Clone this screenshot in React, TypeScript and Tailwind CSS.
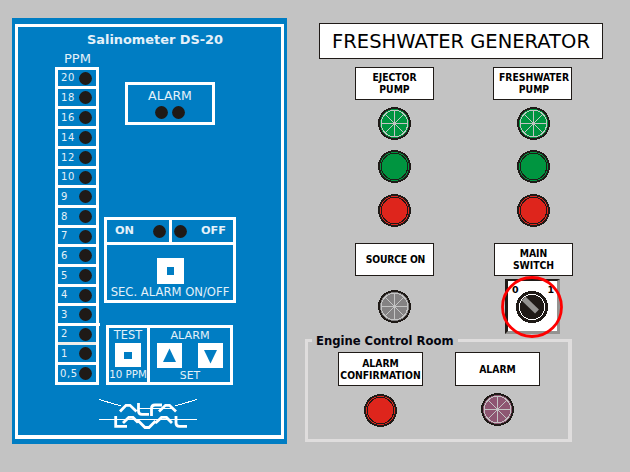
import React from "react";

const LEVELS: { label: string; height: string; extra?: string }[] = [
  { label: "20", height: "h-[16px]" },
  { label: "18", height: "h-[17px]" },
  { label: "16", height: "h-[17px]" },
  { label: "14", height: "h-[17px]" },
  { label: "12", height: "h-[17px]" },
  { label: "10", height: "h-[16px]" },
  { label: "9", height: "h-[17px]" },
  { label: "8", height: "h-[17px]" },
  { label: "7", height: "h-[16px]" },
  { label: "6", height: "h-[17px]" },
  { label: "5", height: "h-[17px]" },
  { label: "4", height: "h-[16px]" },
  {
    label: "3",
    height: "h-[17px]",
    extra: "relative after:absolute after:-right-[4px] after:-bottom-[3px] after:h-[3px] after:w-[4px] after:bg-white",
  },
  { label: "2", height: "h-[16px]", extra: "shadow-[0_3px_0_#efeeea]" },
  { label: "1", height: "h-[17px]" },
  { label: "0,5", height: "h-[17px]" },
];

function Dot({ className = "" }: { className?: string }) {
  return (
    <svg width="13" height="13" viewBox="0 0 13 13" className={`block shrink-0 ${className}`}>
      <circle cx="6.5" cy="6.5" r="6.4" fill="#1f1a17" />
    </svg>
  );
}

function Scale() {
  return (
    <div className="flex h-[318px] w-[44px] flex-col gap-[3px] bg-white p-[3px]">
      {LEVELS.map((level) => (
        <div
          key={level.label}
          className={`flex shrink-0 items-center justify-between bg-[#007dc3] pr-[4px] ${level.height} ${level.extra ?? ""} ${level.label === "0,5" ? "pl-[2px]" : "pl-[3px]"}`}
        >
          <span className="w-0 text-[10px] leading-[14px] tracking-[0.6px] whitespace-nowrap">{level.label}</span>
          <Dot />
        </div>
      ))}
    </div>
  );
}

function AlfaLavalLogo() {
  return (
    <svg width="98" height="34" viewBox="0 0 98 34" fill="none" stroke="#fff" className="mt-[13px] block">
      <path strokeWidth="1" shapeRendering="crispEdges" d="M0 1.5 L22 8 M76 8 L98 1.5 M40 10.5 H74 M0 21.5 H98" />
      <path
        strokeWidth="2.8"
        d="M21 13.5 L27 7.300 H31 L37.500 13.5 M39.500 5 V13 Q39.500 16.300 43 16.300 H50 M52.500 18 V10.500 Q52.500 7 56 7 H63 M60 13.500 L66.500 7.300 H70.500 L77 13.500"
      />
      <path
        strokeWidth="2.8"
        d="M16.700 18 V28.400 H28 M24 25 L29.700 19.400 H34 L39 24.500 M39 22.500 L46 29.500 H50 L56.500 23 M56.500 25 L62.500 19.400 H67.500 L73 25 M77 18 V25 Q77 28.400 80.500 28.400 H88"
      />
    </svg>
  );
}

function Salinometer() {
  return (
    <section className="mt-[18px] ml-[12px] h-[426px] w-[275px] shrink-0 bg-[#007dc3] px-[3px] pt-[6px] text-[#e4f1f9]">
      <div className="h-[415px] border-[3px] border-b-4 border-white">
        <h1 className="mt-1 pl-[69px] text-[12.9px] leading-[17px] font-bold whitespace-nowrap">Salinometer DS-20</h1>
        <div className="flex">
          <div className="ml-[37px] w-[44px] shrink-0 pt-[2px]">
            <div className="pl-[9px] text-[13px] leading-[17px]">PPM</div>
            <Scale />
          </div>
          <div className="flex flex-col items-start">
            <div className="mt-[34px] ml-[26px] flex h-[43px] w-[90px] flex-col items-center border-[3px] border-white pt-[2px]">
              <span className="text-[12.5px] leading-[17px]">ALARM</span>
              <div className="mt-[1.5px] flex gap-[4px]">
                <Dot />
                <Dot />
              </div>
            </div>

            <div className="mt-[92px] ml-[5px] h-[86px] w-[132px] border-[3px] border-white">
              <div className="flex h-[25px] border-b-[3px] border-white text-[11.3px] leading-[22px] font-bold">
                <div className="flex w-[65px] items-center justify-between border-r-[3px] border-white pr-[3px] pl-[8px]">
                  <span>ON</span>
                  <Dot />
                </div>
                <div className="flex grow items-center justify-between pr-[7px] pl-[2px]">
                  <Dot />
                  <span>OFF</span>
                </div>
              </div>
              <div className="flex flex-col items-center">
                <div className="mt-[13px] ml-[1px] flex h-[26px] w-[27px] items-center justify-center bg-white">
                  <div className="h-[8px] w-[7px] bg-[#007dc3]" />
                </div>
                <span className="text-[11.6px] leading-[17px] whitespace-nowrap">SEC. ALARM ON/OFF</span>
              </div>
            </div>

            <div className="mt-[22px] ml-[7px] flex h-[60px] w-[127px] border-[3px] border-white">
              <div className="flex w-[41px] flex-col items-center border-r-[3px] border-white text-[11.4px] leading-[15px]">
                <span>TEST</span>
                <div className="flex h-[26px] w-[26px] items-center justify-center bg-white">
                  <div className="h-[7px] w-[8px] bg-[#007dc3]" />
                </div>
                <span className="text-[10.3px] leading-[15px] whitespace-nowrap">10 PPM</span>
              </div>
              <div className="flex grow flex-col items-center text-[11.2px] leading-[15px]">
                <span>ALARM</span>
                <div className="flex gap-[16px]">
                  <svg width="25" height="25" viewBox="0 0 25 25" className="bg-white">
                    <path d="M12.500 5.500 L19 19 H6 Z" fill="#007dc3" />
                  </svg>
                  <svg width="25" height="25" viewBox="0 0 25 25" className="bg-white">
                    <path d="M12.500 20.500 L19 7 H6 Z" fill="#007dc3" />
                  </svg>
                </div>
                <span className="text-[10.8px] leading-[16px]">SET</span>
              </div>
            </div>

            <AlfaLavalLogo />
          </div>
        </div>
      </div>
    </section>
  );
}

function Plate({ children, className = "" }: { children: React.ReactNode; className?: string }) {
  return (
    <div
      className={`flex shrink-0 items-center justify-center border border-[#1f1a17] bg-white text-center text-[10.3px] leading-[12px] font-bold whitespace-nowrap text-black font-stretch-condensed ${className}`}
    >
      {children}
    </div>
  );
}

function Lamp({ color, spokes = false, className = "" }: { color: string; spokes?: boolean; className?: string }) {
  return (
    <svg width="33" height="33" viewBox="0 0 33 33" fill="none" shapeRendering="crispEdges" className={`block shrink-0 ${className}`}>
      <circle cx="16.5" cy="16.5" r="15.5" fill={color} stroke="#1f1a17" strokeWidth="2" />
      {spokes ? (
        <g stroke="#c4c4c4">
          <circle cx="16.5" cy="16.5" r="13.2" />
          <path d="M16.5 3 V30 M3 16.5 H30 M7 7 L26 26 M26 7 L7 26" />
          <circle cx="16.5" cy="16.5" r="1" />
        </g>
      ) : (
        <circle cx="16.5" cy="16.5" r="13.2" stroke="#1f1a17" />
      )}
    </svg>
  );
}

function MainSwitch() {
  return (
    <div className="relative mt-[3px] ml-[12px] h-[55px] w-[55px] self-start border-[3px] border-t-[2px] border-t-[#1f1a17] border-r-[#949391] border-b-[#949391] border-l-[#1f1a17] bg-white">
      <div className="flex justify-between pt-[3px] pr-[3px] pl-[4px] text-[9.5px] leading-[12px] font-bold text-black">
        <span>0</span>
        <span>1</span>
      </div>
      <svg width="62" height="62" viewBox="0 0 62 62" fill="none" className="absolute -top-[5px] -left-[7px]">
        <circle cx="31" cy="31" r="16" fill="#1f1a17" shapeRendering="crispEdges" />
        <circle cx="31" cy="31" r="12.700" stroke="#fff" shapeRendering="crispEdges" />
        <path d="M22.500 22.500 L36 35.500" stroke="#949391" strokeWidth="5.500" />
        <circle cx="31" cy="31" r="29.500" stroke="#fe0000" strokeWidth="2.800" />
      </svg>
    </div>
  );
}

function PumpLamps({ className = "" }: { className?: string }) {
  return (
    <div className={`flex flex-col ${className}`}>
      <Lamp color="#009540" spokes className="mt-[7px]" />
      <Lamp color="#009540" className="mt-[10px]" />
      <Lamp color="#de251c" className="mt-[11px]" />
    </div>
  );
}

export default function App() {
  return (
    <main className="flex h-[472px] w-[630px] overflow-hidden bg-[#c3c3c3] font-['DejaVu_Sans',sans-serif]">
      <Salinometer />
      <div className="flex grow flex-col items-start">
        <h2 className="mt-[23px] ml-[32px] flex h-[36px] w-[284px] items-center justify-center border border-[#1f1a17] bg-white pt-[2px] text-[19.5px] leading-[34px] whitespace-nowrap text-black">
          FRESHWATER GENERATOR
        </h2>
        <div className="mt-[8px] ml-[68px] flex h-[272px] gap-[59px]">
          <div className="flex w-[79px] flex-col items-center">
            <Plate className="h-[33px] w-[79px] pb-[2px]">EJECTOR<br />PUMP</Plate>
            <PumpLamps />
            <Plate className="mt-[16px] h-[33px] w-[79px] pb-[2px] pl-[2px] tracking-[-0.2px]">SOURCE ON</Plate>
            <Lamp color="#848283" spokes className="mt-[14px]" />
          </div>
          <div className="flex w-[79px] flex-col items-center">
            <Plate className="h-[33px] w-[79px] pb-[2px] pl-[3px]">FRESHWATER<br />PUMP</Plate>
            <PumpLamps className="ml-px" />
            <Plate className="mt-[16px] ml-[2px] h-[33px] w-[79px] pb-[2px]">MAIN<br />SWITCH</Plate>
            <MainSwitch />
          </div>
        </div>
        <div className="ml-[18px] flex h-[103px] w-[267px] flex-col border-[3px] border-t-0 border-r-4 border-[#dfdddd]">
          <div className="flex h-[3px] items-center">
            <div className="h-[3px] w-[4px] bg-[#dfdddd]" />
            <div className="w-[146px] pl-[4px] text-[12.9px] leading-[3px] font-bold whitespace-nowrap text-[#05050f] font-stretch-condensed">
              Engine Control Room
            </div>
            <div className="h-[3px] grow bg-[#dfdddd]" />
          </div>
          <div className="mt-[10px] ml-[30px] flex gap-[32px]">
            <div className="flex flex-col items-center">
              <Plate className="h-[34px] w-[85px]">ALARM<br />CONFIRMATION</Plate>
              <Lamp color="#de251c" className="mt-[8px]" />
            </div>
            <div className="flex flex-col items-center">
              <Plate className="h-[34px] w-[85px]">ALARM</Plate>
              <Lamp color="#8e5672" spokes className="mt-[7px]" />
            </div>
          </div>
        </div>
      </div>
    </main>
  );
}
